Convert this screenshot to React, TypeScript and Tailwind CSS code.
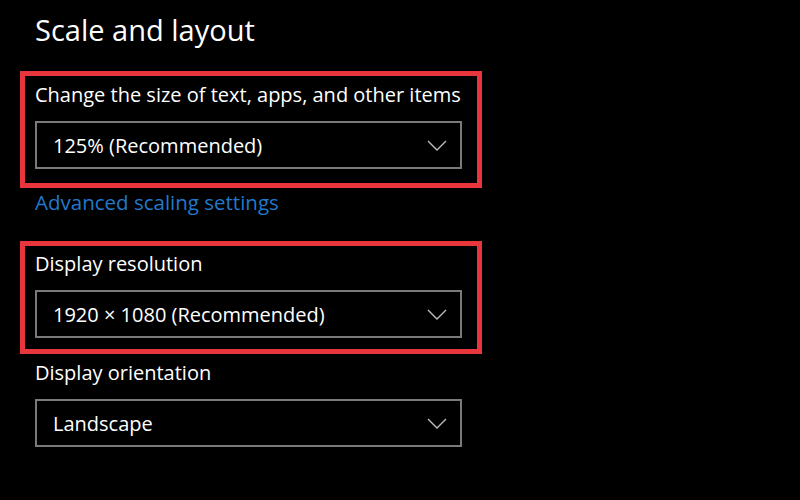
const Dropdown = ({ value }: { value: string }) => (
  <div className="flex items-center justify-between w-[427px] h-[48px] border-2 border-[#7a7a7a] pl-[16px] pr-[12px]">
    <span className="text-[20px] leading-[21px] text-white whitespace-nowrap">{value}</span>
    <svg width="20" height="11" viewBox="0 0 20 11" className="mr-[1px]">
      <path d="M1 1 L10 10 L19 1" fill="none" stroke="#bdbdbd" strokeWidth="1.4" />
    </svg>
  </div>
);

const App = () => {
  return (
    <div
      className="w-[800px] h-[500px] bg-black text-white overflow-hidden pt-[16px]"
      style={{ fontFamily: '"Open Sans", "Noto Sans", sans-serif' }}
    >
      <h1 className="ml-[35px] text-[29px] leading-[28px] font-normal">Scale and layout</h1>

      <div className="ml-[20px] mt-[27px] w-[462px] h-[117px] border-[5px] border-[#e8363c] pl-[10px] pt-[8px]">
        <div className="text-[20px] leading-[21px] whitespace-nowrap">Change the size of text, apps, and other items</div>
        <div className="mt-[16px]">
          <Dropdown value="125% (Recommended)" />
        </div>
      </div>

      <a className="block ml-[35px] mt-[4px] text-[20.5px] leading-[21px] text-[#2079cc]">Advanced scaling settings</a>

      <div className="ml-[20px] mt-[28px] w-[462px] h-[113px] border-[5px] border-[#e8363c] pl-[10px] pt-[7px]">
        <div className="text-[20px] leading-[21px]">Display resolution</div>
        <div className="mt-[16px]">
          <Dropdown value="1920 × 1080 (Recommended)" />
        </div>
      </div>

      <div className="ml-[35px] mt-[8px] text-[20px] leading-[21px]">Display orientation</div>
      <div className="ml-[35px] mt-[16px]">
        <Dropdown value="Landscape" />
      </div>
    </div>
  );
};

export default App;
